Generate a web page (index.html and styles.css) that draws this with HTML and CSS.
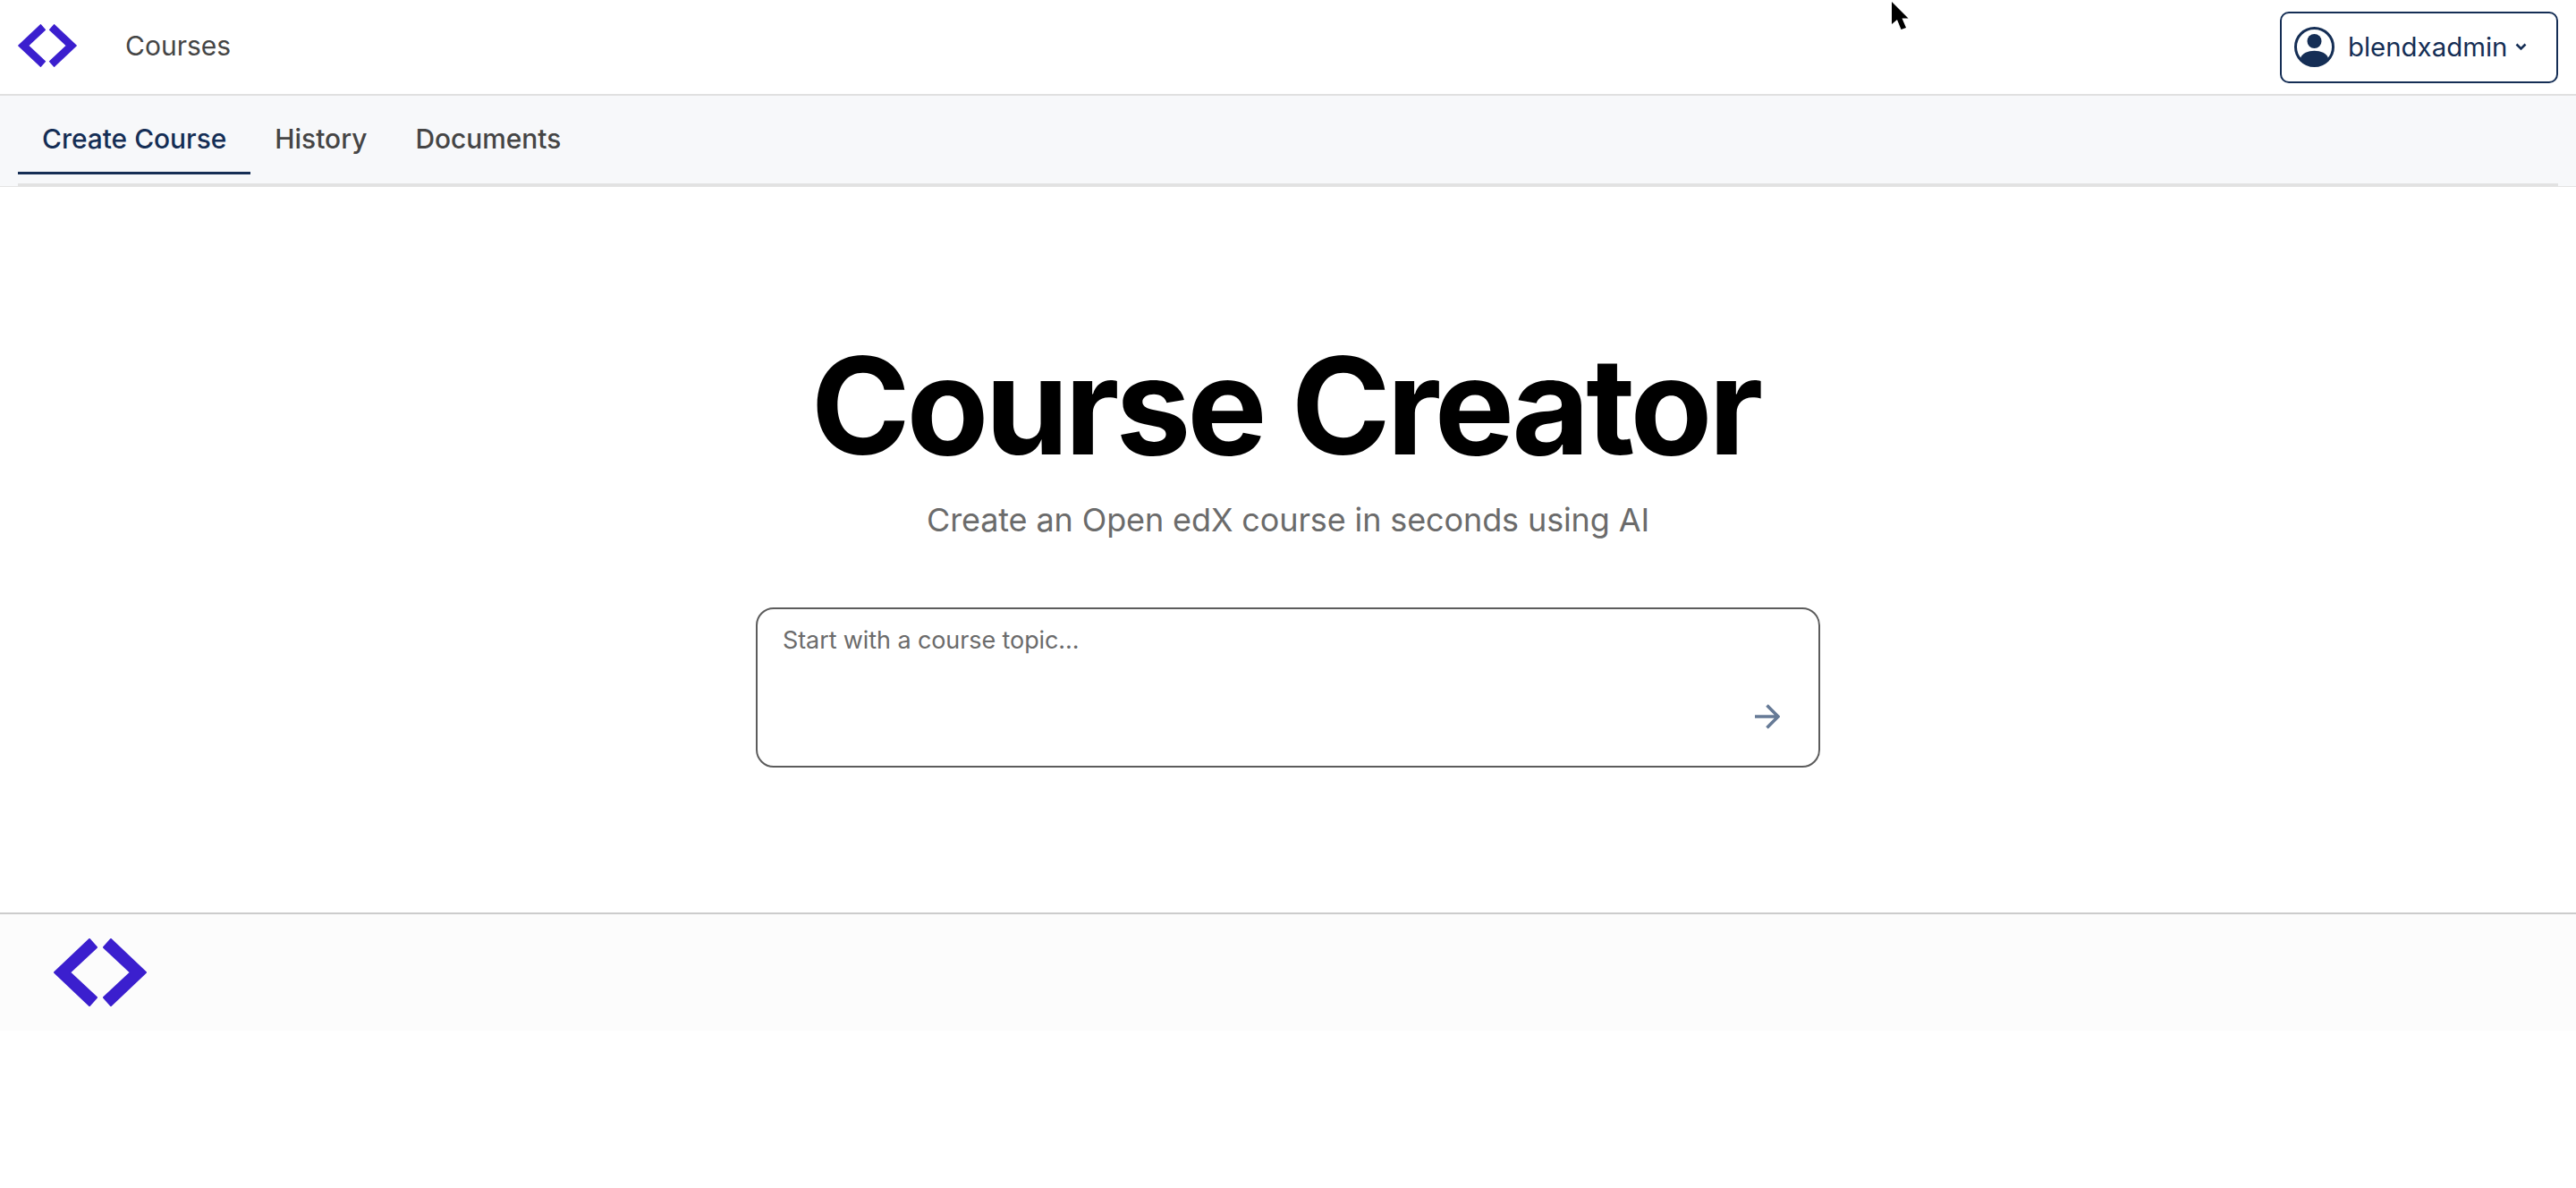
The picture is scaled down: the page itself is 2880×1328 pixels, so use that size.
FILE: index.html
```html
<html>
<head>
    <title>Course Creator</title>
    <link rel="stylesheet" href="styles.css">
</head>
<body>
    <header class="topbar">
        <div class="brand">
            <svg class="logo-small" viewBox="-1 -1 104 76"><path class="logo-mark" d="M0 37 L39 0 L47 9 L17 37 L47 65 L39 74 Z M102 37 L63 0 L55 9 L85 37 L55 65 L63 74 Z"/></svg>
            <a class="courses-link">Courses</a>
        </div>
        <button class="user-btn">
            <svg class="user-icon" viewBox="0 0 45 45"><circle cx="22.5" cy="22.5" r="21" fill="none" stroke="#152e55" stroke-width="3"/><circle cx="22.5" cy="16" r="8" fill="#152e55"/><path d="M7 35 C10 24 35 24 38 35 C30 46 15 46 7 35 Z" fill="#152e55"/></svg>
            <span>blendxadmin</span>
            <svg class="chevron" viewBox="0 0 13 9"><path d="M1.5 1.5 L6.5 6.5 L11.5 1.5" fill="none" stroke="#152e55" stroke-width="2.6"/></svg>
        </button>
    </header>
    <nav class="tabs">
        <div class="tab-row">
            <a class="tab tab-active">Create Course</a>
            <a class="tab">History</a>
            <a class="tab">Documents</a>
        </div>
    </nav>
    <main class="hero">
        <h1>Course Creator</h1>
        <p class="subtitle">Create an Open edX course in seconds using AI</p>
        <div class="prompt-box">
            <div class="placeholder">Start with a course topic...</div>
            <svg class="arrow" viewBox="0 0 28 28"><path d="M0 14 H26 M13.5 1.5 L26 14 L13.5 26.5" fill="none" stroke="#667a96" stroke-width="3.6"/></svg>
        </div>
    </main>
    <footer class="footer">
        <svg class="logo-large" viewBox="-1 -1 104 76"><path class="logo-mark" d="M0 37 L39 0 L47 9 L17 37 L47 65 L39 74 Z M102 37 L63 0 L55 9 L85 37 L55 65 L63 74 Z"/></svg>
    </footer>
    <svg class="cursor" viewBox="0 0 22 36"><path d="M2 2 L2 27 L8 22 L12.5 33 L18 31 L13.5 20.5 L20.5 20.5 Z" fill="#000" stroke="#fff" stroke-width="1.5" paint-order="stroke"/></svg>
</body>
</html>
```

FILE: styles.css
```css
body {
    margin: 0;
    font-family: Inter, "Liberation Sans", sans-serif;
    background-color: #ffffff;
    color: #333;
}
.topbar {
    display: flex;
    justify-content: space-between;
    align-items: center;
    height: 105px;
    padding: 0 20px;
    border-bottom: 2px solid #e0e0e0;
}
.brand {
    display: flex;
    align-items: center;
    gap: 54px;
    padding-bottom: 4px;
}
.logo-small {
    width: 66px;
    height: 48px;
}
.logo-mark {
    fill: #3b1fce;
    stroke: #3b1fce;
    stroke-width: 2;
    stroke-linejoin: round;
}
.courses-link {
    font-size: 30px;
    color: #454545;
}
.user-btn {
    display: flex;
    align-items: center;
    gap: 15px;
    height: 80px;
    width: 311px;
    padding: 0 14px;
    background: white;
    border: 2px solid #152e55;
    border-radius: 10px;
    font-family: inherit;
    font-size: 29.4px;
    color: #152e55;
}
.user-icon {
    width: 45px;
    height: 45px;
}
.chevron {
    width: 13px;
    height: 9px;
    margin-left: -6px;
}
.tabs {
    background-color: #f7f8fa;
    border-bottom: 1px solid #e4e4e4;
}
.tab-row {
    display: flex;
    height: 98px;
    margin: 0 20px;
    border-bottom: 3px solid #e2e2e2;
}
.tab {
    height: 85px;
    line-height: 96px;
    padding: 0 27px;
    font-size: 29.9px;
    font-weight: 500;
    color: #454545;
}
.tab-active {
    color: #152e55;
    border-bottom: 3px solid #152e55;
}
.hero {
    display: flex;
    flex-direction: column;
    align-items: center;
    height: 811px;
}
h1 {
    margin: 160px 6px 0 0;
    font-size: 150px;
    line-height: 170px;
    font-weight: 750;
    font-optical-sizing: none;
    letter-spacing: -4.2px;
    color: #000;
}
.subtitle {
    margin: 20px 0 0 0;
    font-size: 36px;
    letter-spacing: -0.12px;
    color: #6b6b6b;
}
.prompt-box {
    position: relative;
    width: 1132px;
    height: 137px;
    margin-top: 76px;
    padding: 18px 26px 20px 28px;
    border: 2px solid #5c5c5c;
    border-radius: 20px;
}
.placeholder {
    font-size: 27px;
    letter-spacing: -0.1px;
    color: #6b6b6b;
}
.arrow {
    position: absolute;
    right: 43px;
    bottom: 41px;
    width: 28px;
    height: 28px;
}
.footer {
    display: flex;
    align-items: center;
    height: 130px;
    padding-left: 60px;
    background-color: #fcfcfc;
    border-top: 2px solid #cccccc;
}
.logo-large {
    width: 104px;
    height: 76px;
}
.cursor {
    position: absolute;
    left: 2113px;
    top: 0;
    width: 22px;
    height: 36px;
}
```
